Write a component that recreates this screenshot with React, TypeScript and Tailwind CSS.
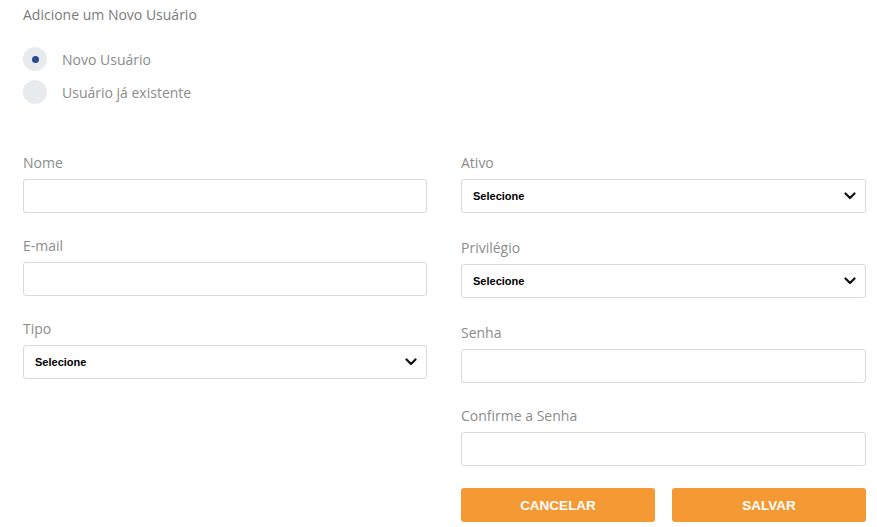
import React from 'react';

const sans = { fontFamily: '"Open Sans", "Liberation Sans", sans-serif' };
const arial = { fontFamily: '"Liberation Sans", Arial, sans-serif' };

function Label({ children }: { children: React.ReactNode }) {
  return (
    <div className="text-[14px] leading-[17px] text-[#8c8c8c] mb-[8px]" style={sans}>
      {children}
    </div>
  );
}

function TextInput() {
  return <div className="h-[34px] w-full rounded-[3px] border border-[#d9d9d9] bg-white" />;
}

function Chevron() {
  return (
    <svg width="12" height="8" viewBox="0 0 12 8" className="shrink-0">
      <path d="M1.5 1.5 L6 6 L10.5 1.5" fill="none" stroke="#111" strokeWidth="2.2" strokeLinecap="round" strokeLinejoin="round" />
    </svg>
  );
}

function Select() {
  return (
    <div className="h-[34px] w-full rounded-[3px] border border-[#d9d9d9] bg-white flex items-center justify-between pl-[11px] pr-[9px]">
      <span className="text-[11px] font-bold text-black" style={arial}>
        Selecione
      </span>
      <Chevron />
    </div>
  );
}

function Radio({ checked, label }: { checked?: boolean; label: string }) {
  return (
    <div className="flex items-center h-[24px]">
      <div className="w-[24px] h-[24px] rounded-full bg-[#e8ebee] flex items-center justify-center">
        {checked && <div className="w-[7px] h-[7px] rounded-full bg-[#2b4a93]" />}
      </div>
      <span className="ml-[15px] text-[14px] text-[#8c8c8c]" style={sans}>
        {label}
      </span>
    </div>
  );
}

export default function App() {
  return (
    <div className="w-[877px] h-[527px] bg-white pl-[23px] pr-[11px] overflow-hidden">
      <div className="pt-[6px] text-[14px] leading-[18px] text-[#7a7a7a]" style={sans}>
        Adicione um Novo Usuário
      </div>

      <div className="mt-[23px] flex flex-col gap-[9px]">
        <Radio checked label="Novo Usuário" />
        <Radio label="Usuário já existente" />
      </div>

      <div className="mt-[50px] grid grid-cols-[404px_405px] gap-x-[34px]">
        {/* left column */}
        <div className="flex flex-col">
          <Label>Nome</Label>
          <TextInput />
          <div className="h-[24px]" />
          <Label>E-mail</Label>
          <TextInput />
          <div className="h-[24px]" />
          <Label>Tipo</Label>
          <Select />
        </div>

        {/* right column */}
        <div className="flex flex-col">
          <Label>Ativo</Label>
          <Select />
          <div className="h-[26px]" />
          <Label>Privilégio</Label>
          <Select />
          <div className="h-[26px]" />
          <Label>Senha</Label>
          <TextInput />
          <div className="h-[24px]" />
          <Label>Confirme a Senha</Label>
          <TextInput />
          <div className="mt-[22px] grid grid-cols-2 gap-[17px]">
            <button className="h-[34px] pt-[3px] rounded-[3px] bg-[#f59935] text-white text-[13.5px] font-bold" style={arial}>
              CANCELAR
            </button>
            <button className="h-[34px] pt-[3px] rounded-[3px] bg-[#f59935] text-white text-[13.5px] font-bold" style={arial}>
              SALVAR
            </button>
          </div>
        </div>
      </div>
    </div>
  );
}
